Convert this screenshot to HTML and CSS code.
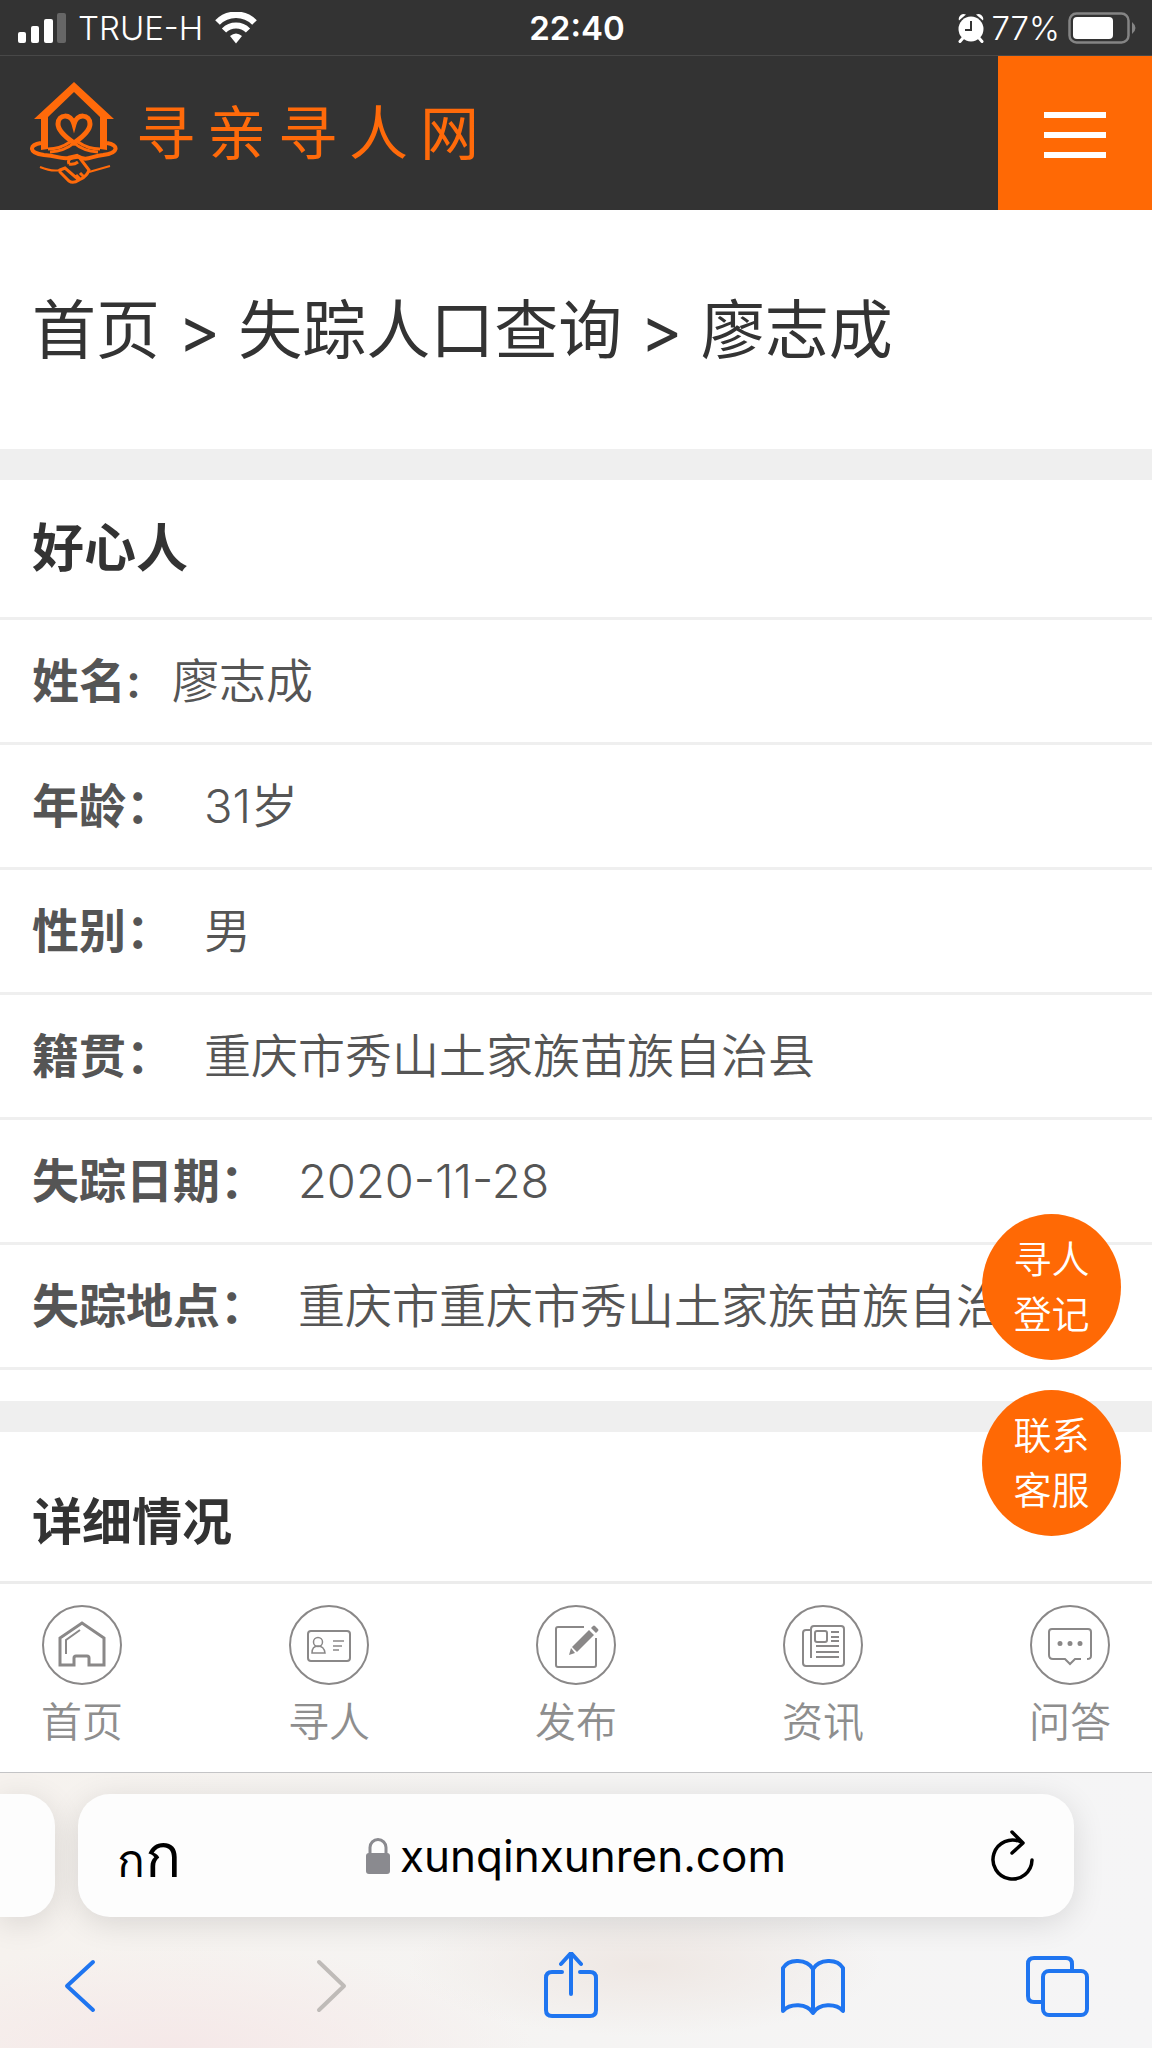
FILE: index.html
```
<!DOCTYPE html>
<html lang="zh-CN">
<head>
    <meta charset="UTF-8" />
    <meta name="viewport" content="width=device-width, initial-scale=1" />
    <title>寻亲寻人网</title>
    <link rel="stylesheet" href="styles.css">
</head>
<body>
    <div class="status-bar">
        <div class="status-left">
            <svg width="48" height="30" viewBox="0 0 48 30" fill="#fff">
                <rect x="0" y="19" width="8" height="11" rx="2" />
                <rect x="13" y="13" width="8" height="17" rx="2" />
                <rect x="26" y="6" width="9" height="24" rx="2" />
                <rect x="39" y="0" width="9" height="30" rx="2" fill="#666" />
            </svg>
            <span class="carrier">TRUE-H</span>
            <svg width="42" height="32" viewBox="0 0 42 32" fill="none" stroke="#fff">
                <path d="M2.500 10.500a26 26 0 0 1 37 0" stroke-width="6.500" />
                <path d="M9 18.500a17 17 0 0 1 24 0" stroke-width="6" />
                <path d="M21 31.500l-6-7.500q6-5 12 0z" fill="#fff" stroke="none" />
            </svg>
        </div>
        <span class="time">22:40</span>
        <div class="status-right">
            <svg width="26" height="30" viewBox="0 0 26 30">
                <path d="M5 25l-3 3.500M21 25l3 3.500" stroke="#fff" stroke-width="3" stroke-linecap="round" />
                <path d="M1 7.500a5 5 0 0 1 7-6zM25 7.500a5 5 0 0 0-7-6z" fill="#fff" />
                <circle cx="13" cy="16" r="12.500" fill="#fff" />
                <path d="M13 8v9H7" fill="none" stroke="#333" stroke-width="2" />
            </svg>
            <span>77%</span>
            <svg width="68" height="32" viewBox="0 0 68 32">
                <rect x="1.500" y="1.500" width="59" height="29" rx="7" fill="none" stroke="#858585" stroke-width="2.500" />
                <rect x="5" y="5" width="40" height="22" rx="4" fill="#fff" />
                <path d="M64 10q7 6 0 12z" fill="#858585" />
            </svg>
        </div>
    </div>

    <header class="header">
        <a class="logo" href="#">
            <svg width="88" height="102" viewBox="0 0 88 102" fill="none" stroke="#ff6a0a">
                <path d="M44 0L4 37h7v31l7-1V35L44 10l26 25v32l7 1V37h7z" fill="#ff6a0a" stroke="none" />
                <path d="M18 67q12 0 22-7M70 67q-12 0-22-7" stroke-width="3" />
                <path d="M44 61C34 54 28 48 28 42c0-10 13-11 16 0 3-11 16-10 16 0 0 6-6 12-16 19z" stroke-width="5" />
                <path d="M11 61C-1 63-2 71 14 73c14 1 16 4 24 3l9-2c10 6 14 0 26-1 16-2 16-10 4-12" stroke-width="4" />
                <path d="M20 70q15-1 24-9 9 8 24 9" stroke-width="3" />
                <path d="M10 85q12 5 20 3M80 84q-14 4-21 6" stroke-width="2" />
                <path d="M30 88l5-2 14 12q-6 4-10 1l-9-9zM39 82q-2-5 4-6l6-1 10 13q-2 6-8 9l-4 2M39 82q5 1 9-2M50 91l4 4M46 93l4 4" stroke-width="3" />
            </svg>
            <span class="logo-text">寻亲寻人网</span>
        </a>
        <button class="menu-btn" type="button" aria-label="菜单">
            <span></span>
            <span></span>
            <span></span>
        </button>
    </header>

    <main class="content">
        <nav class="breadcrumb">
            <a href="#">首页</a> &gt; <a href="#">失踪人口查询</a> &gt; <a href="#">廖志成</a>
        </nav>

        <section class="card">
            <h2>好心人</h2>
            <dl class="info">
                <div class="row"><dt>姓名:</dt><dd>廖志成</dd></div>
                <div class="row"><dt>年龄：</dt><dd>31岁</dd></div>
                <div class="row"><dt>性别：</dt><dd>男</dd></div>
                <div class="row"><dt>籍贯：</dt><dd>重庆市秀山土家族苗族自治县</dd></div>
                <div class="row"><dt>失踪日期：</dt><dd>2020-11-28</dd></div>
                <div class="row"><dt>失踪地点：</dt><dd>重庆市重庆市秀山土家族苗族自治县</dd></div>
            </dl>
        </section>

        <section class="card detail">
            <h2>详细情况</h2>
        </section>
    </main>

    <div class="bottom">
        <div class="float-btns">
            <a href="#">寻人<br>登记</a>
            <a href="#">联系<br>客服</a>
        </div>

        <nav class="tab-bar">
            <a href="#">
                <svg viewBox="0 0 80 80">
                    <circle cx="40" cy="40" r="39" />
                    <path d="M18 60V33L40 18l22 15v27H47v-7q0-2-2-2H34q-2 0-2 2v7z" stroke-width="3" />
                    <path d="M24 49V35l14-10" />
                </svg>
                首页
            </a>
            <a href="#">
                <svg viewBox="0 0 80 80">
                    <circle cx="40" cy="40" r="39" />
                    <rect x="19" y="26" width="42" height="30" rx="3" />
                    <circle cx="29" cy="37" r="4.500" stroke-width="1.500" />
                    <path d="M23 48q0-7 6-7t7 7zM44 36h11M44 41h9M44 45h6" stroke-width="1.500" />
                </svg>
                寻人
            </a>
            <a href="#">
                <svg viewBox="0 0 80 80">
                    <circle cx="40" cy="40" r="39" />
                    <path d="M48 22H22q-2 0-2 2v36q0 2 2 2h36q2 0 2-2V33" />
                    <path d="M36 42l17-17 5 5-17 17zM55 23l2-2q1-1 2 0l3 3q1 1 0 2l-2 2zM35 43l4 5-6 2z" fill="#8a8888" stroke="none" />
                </svg>
                发布
            </a>
            <a href="#">
                <svg viewBox="0 0 80 80">
                    <circle cx="40" cy="40" r="39" />
                    <path d="M28 53V24q0-3 3-3h27q3 0 3 3v34q0 3-3 3H23q-3 0-3-3V28q0-3 3-3h5" />
                    <rect x="32" y="26" width="12" height="11" rx="2" />
                    <path d="M48 27h8M48 32h8M48 36h8M33 41h23M33 47h23M33 52h23" />
                </svg>
                资讯
            </a>
            <a href="#">
                <svg viewBox="0 0 80 80">
                    <circle cx="40" cy="40" r="39" />
                    <path d="M51 54h-6l-5 5-5-5H23q-4 0-4-4V27q0-3 3-3h36q3 0 3 3v24q0 3-4 3" />
                    <path d="M30 38.500v0M40 38.500v0M50 38.500v0" stroke-width="5" stroke-linecap="round" />
                </svg>
                问答
            </a>
        </nav>

        <div class="browser">
            <div class="address-row">
                <div class="pill prev-tab"></div>
                <div class="pill address">
                    <button class="reader" type="button" aria-label="阅读选项"><span>ก</span><span class="big">ก</span></button>
                    <div class="url">
                        <svg width="24" height="36" viewBox="0 0 24 36">
                            <path d="M4 16V9.500a8 8 0 0 1 16 0V16" fill="none" stroke="#8a8a8f" stroke-width="3" />
                            <rect x="0" y="15" width="24" height="21" rx="3" fill="#8a8a8f" />
                        </svg>
                        <span>xunqinxunren.com</span>
                    </div>
                    <button class="reload" type="button" aria-label="刷新">
                        <svg width="44" height="52" viewBox="0 0 44 52" fill="none" stroke="#000" stroke-width="3.500" stroke-linecap="round" stroke-linejoin="round">
                            <path d="M41 30A19.500 19.500 0 1 1 30 12M21 2l11 11-11 10" />
                        </svg>
                    </button>
                </div>
            </div>
            <div class="toolbar">
                <button type="button" aria-label="后退">
                    <svg viewBox="0 0 66 68"><path d="M46 10L20 34l26 24" /></svg>
                </button>
                <button type="button" aria-label="前进" disabled>
                    <svg viewBox="0 0 66 68"><path d="M28 10l25 24-25 24" /></svg>
                </button>
                <button type="button" aria-label="分享">
                    <svg viewBox="0 0 66 68"><path d="M26 20H16q-6 0-6 6v32q0 6 6 6h38q6 0 6-6V26q0-6-6-6H44M35 42V2M25 12L35 1l10 11" /></svg>
                </button>
                <button type="button" aria-label="书签">
                    <svg viewBox="0 0 66 68"><path d="M33 17C27 7 9 6 3 16v43c7-8 24-8 30 2 6-10 23-10 30-2V16C57 6 39 7 33 17zM33 17v43" /></svg>
                </button>
                <button type="button" aria-label="标签页">
                    <svg viewBox="0 0 66 68"><path d="M19 50H10q-6 0-6-6V12q0-6 6-6h32q6 0 6 6v7" /><rect x="19" y="19" width="44" height="44" rx="6" /></svg>
                </button>
            </div>
        </div>
    </div>
</body>
</html>
```
FILE: styles.css
```
* {
    box-sizing: border-box;
}
body {
    margin: 0;
    min-height: 100vh;
    display: flex;
    flex-direction: column;
    font-family: Inter, "Noto Sans CJK SC", sans-serif;
    background-color: #fff;
    color: #333;
}
a {
    color: inherit;
    text-decoration: none;
}
button {
    padding: 0;
    border: none;
    background: none;
    color: inherit;
    font-family: inherit;
    cursor: pointer;
}
svg {
    display: block;
    flex: none;
}

/* status bar */
.status-bar {
    display: grid;
    grid-template-columns: 1fr auto 1fr;
    align-items: center;
    height: 56px;
    padding: 0 16px 0 18px;
    background-color: #333;
    border-bottom: 1px solid #484848;
    color: #fff;
    font-size: 33px;
    font-weight: 300;
}
.status-left,
.status-right {
    display: flex;
    align-items: center;
    gap: 12px;
}
.status-right {
    justify-content: flex-end;
    gap: 8px;
}
.time {
    font-weight: 600;
}

/* site header */
.header {
    display: flex;
    justify-content: space-between;
    height: 154px;
    background-color: #333;
}
.logo {
    display: flex;
    align-items: center;
    gap: 18px;
    padding-left: 30px;
    color: #ff6a0a;
}
.logo-text {
    padding-bottom: 8px;
    font-size: 59px;
    letter-spacing: 12px;
}
.menu-btn {
    display: flex;
    flex-direction: column;
    align-items: center;
    justify-content: center;
    gap: 14px;
    width: 154px;
    padding-top: 4px;
    background-color: #ff6905;
}
.menu-btn span {
    width: 62px;
    height: 6px;
    background-color: #fff;
}

/* content */
.content {
    flex: 1;
    overflow: hidden;
}
.breadcrumb {
    padding: 72px 32px;
    font-size: 64px;
    line-height: 95px;
}
.card {
    border-top: 31px solid #efefef;
    padding-bottom: 31px;
}
.card h2 {
    margin: 0;
    padding: 0 32px;
    border-bottom: 3px solid #efefef;
    font-size: 52px;
    font-weight: 600;
    line-height: 137px;
}
.detail {
    padding-bottom: 0;
}
.detail h2 {
    padding-top: 40px;
    border-bottom: none;
    font-size: 50px;
    line-height: 100px;
}
.info {
    margin: 0;
}
.row {
    display: flex;
    gap: 31px;
    padding: 0 32px;
    border-bottom: 3px solid #efefef;
    color: #555;
    font-size: 47px;
    line-height: 122px;
    white-space: nowrap;
}
.row dt {
    font-weight: 600;
}
.row dd {
    margin: 0;
    font-weight: 350;
}

/* floating buttons over the page */
.bottom {
    position: sticky;
    bottom: 0;
}
.float-btns {
    position: absolute;
    right: 31px;
    bottom: calc(100% + 45px);
    display: flex;
    flex-direction: column;
    gap: 30px;
}
.float-btns a {
    display: flex;
    align-items: center;
    width: 139px;
    height: 146px;
    justify-content: center;
    border-radius: 50%;
    background-color: #ff6905;
    color: #fff;
    font-size: 38px;
    font-weight: 350;
    line-height: 55px;
}

/* tab bar */
.tab-bar {
    display: flex;
    justify-content: space-between;
    height: 191px;
    padding: 21px 41px 0;
    border-top: 3px solid #ececec;
    background-color: #fff;
    color: #8e8e8e;
    font-size: 41px;
    font-weight: 350;
    line-height: 74px;
}
.tab-bar a {
    display: flex;
    flex-direction: column;
    align-items: center;
}
.tab-bar svg {
    width: 80px;
    height: 80px;
    fill: none;
    stroke: #8a8888;
    stroke-width: 2;
}

/* browser chrome */
.browser {
    height: 276px;
    padding-top: 21px;
    border-top: 1px solid #c4c4c6;
    background:
        radial-gradient(ellipse at 15% 100%, #f5e8e8, rgba(245, 232, 232, 0) 26%),
        radial-gradient(ellipse at 56% 70%, #eee7e3, rgba(238, 231, 227, 0) 26%),
        linear-gradient(90deg, #f6f2ee, #f5f4f3 50%, #f5f5f6);
    overflow: hidden;
}
.address-row {
    display: flex;
    gap: 23px;
    padding-right: 78px;
}
.pill {
    height: 123px;
    background-color: #fdfdfd;
    border-radius: 32px;
    box-shadow: 0 6px 32px rgba(0, 0, 0, 0.12);
}
.prev-tab {
    width: 55px;
    border-radius: 0 32px 32px 0;
}
.address {
    flex: 1;
    display: grid;
    grid-template-columns: 1fr auto 1fr;
    align-items: center;
    padding: 0 39px;
    color: #000;
}
.reader {
    display: flex;
    align-items: baseline;
    justify-self: start;
    font-size: 46px;
}
.reader .big {
    font-size: 60px;
}
.url {
    display: flex;
    align-items: center;
    gap: 10px;
    font-size: 44px;
}
.reload {
    justify-self: end;
}
.toolbar {
    display: flex;
    justify-content: space-between;
    padding: 35px 62px 0 47px;
}
.toolbar svg {
    width: 66px;
    height: 68px;
    fill: none;
    stroke: #1f75f0;
    stroke-width: 4;
    stroke-linecap: round;
    stroke-linejoin: round;
}
.toolbar button:disabled svg {
    stroke: #bfbbb8;
}
```
